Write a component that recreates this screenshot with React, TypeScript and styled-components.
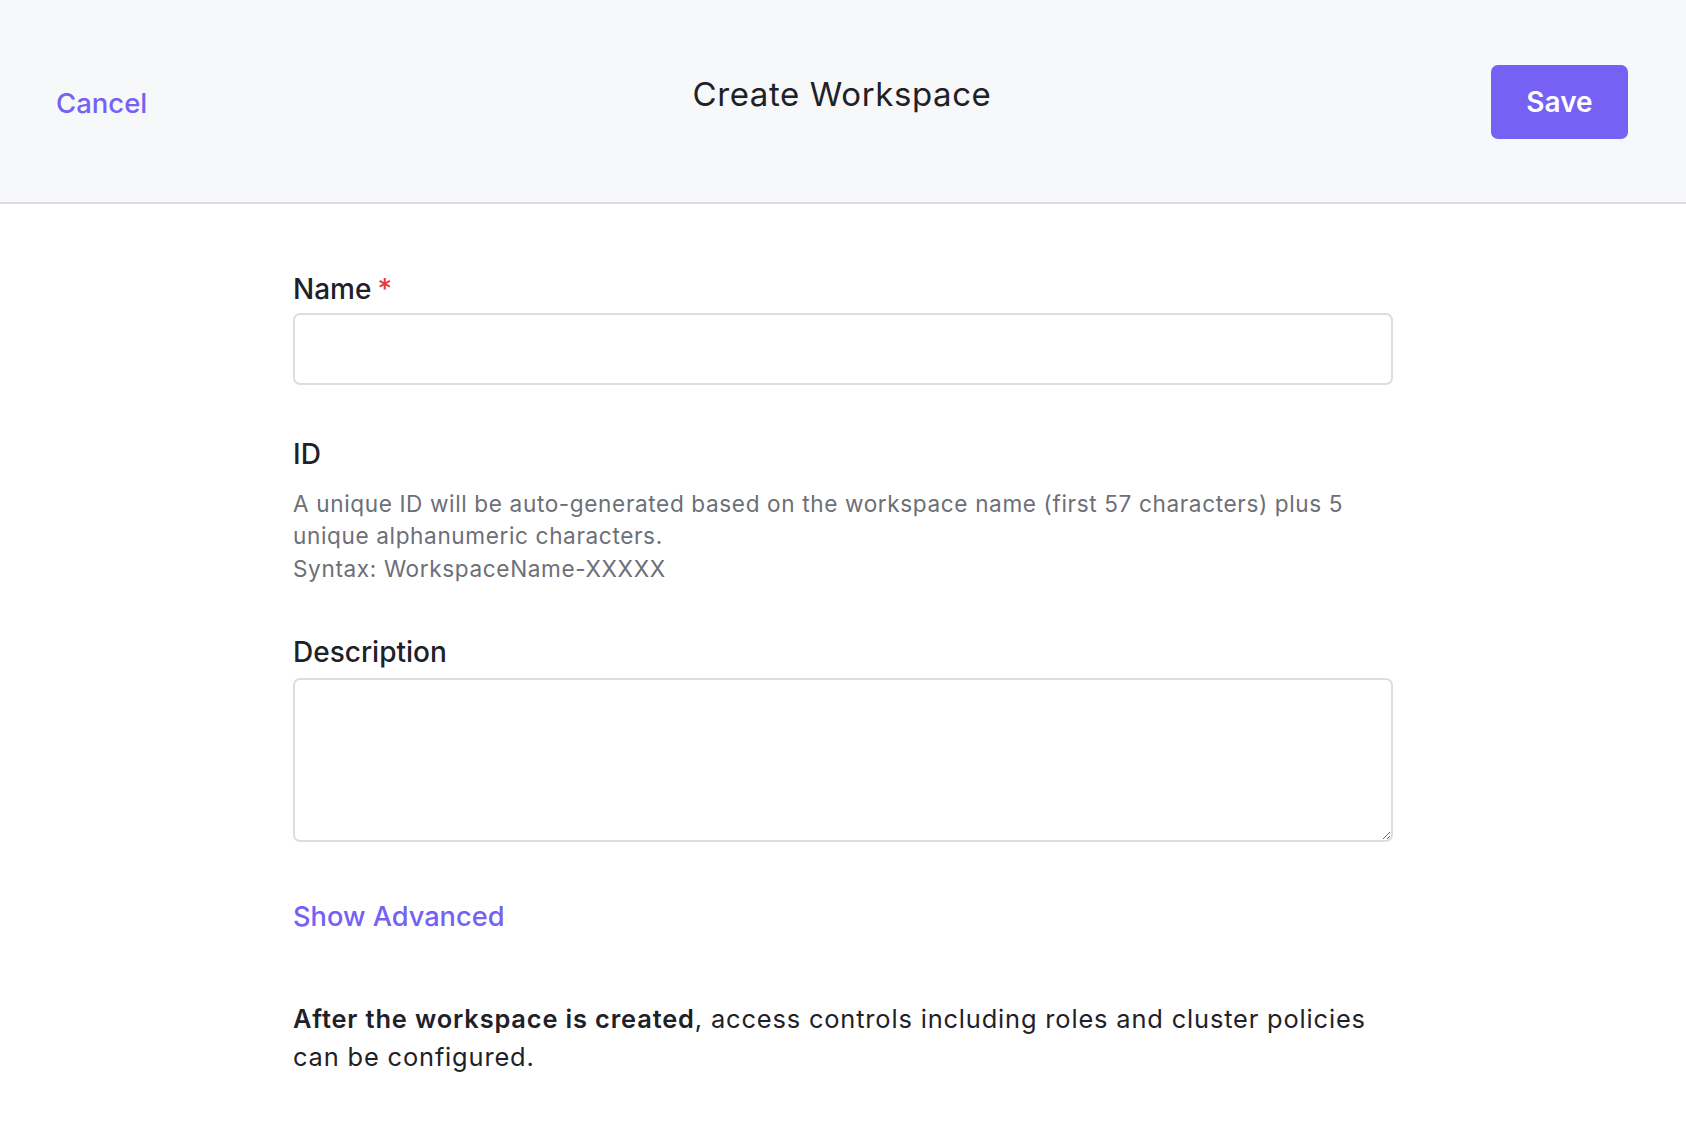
import React from "react";
import styled, { createGlobalStyle } from "styled-components";

const GlobalStyle = createGlobalStyle`
  html, body { margin: 0; padding: 0; background: #ffffff; }
  body { font-family: Inter, "Noto Sans", "Liberation Sans", sans-serif; color: #1f2128; }
  * { box-sizing: border-box; }
`;

const Header = styled.header`
  height: 204px;
  background: #f7f8fa;
  border-bottom: 2px solid #dcdde2;
  display: grid;
  grid-template-columns: 1fr auto 1fr;
  align-items: center;
  padding: 0 58px 0 56px;
`;

const LinkButton = styled.button`
  background: none;
  border: none;
  padding: 0;
  font-family: inherit;
  font-size: 28px;
  font-weight: 500;
  color: #7561f4;
  cursor: pointer;
  justify-self: start;
  line-height: 1.4;
`;

const CancelButton = styled(LinkButton)`
  font-size: 27.5px;
  margin-top: 5px;
`;

const Title = styled.h1`
  margin: 0 0 14px;
  font-size: 33px;
  font-weight: 400;
  color: #1f2128;
  letter-spacing: 0.6px;
`;

const SaveButton = styled.button`
  justify-self: end;
  width: 137px;
  height: 74px;
  margin-top: 1px;
  border: none;
  border-radius: 7px;
  background: #7761f5;
  color: #ffffff;
  font-family: inherit;
  font-size: 28px;
  font-weight: 600;
  cursor: pointer;
`;

const Main = styled.main`
  width: 1100px;
  margin: 0 auto;
  padding-top: 66px;
  display: flex;
  flex-direction: column;
`;

const Field = styled.div<{ $gap?: number }>`
  display: flex;
  flex-direction: column;
  margin-bottom: ${(p) => p.$gap ?? 48}px;
`;

const Label = styled.label<{ $space?: number }>`
  font-size: 28px;
  font-weight: 500;
  line-height: 39px;
  color: #1f2128;
  margin-bottom: ${(p) => p.$space ?? 7}px;
`;

const Required = styled.span`
  color: #e03c3c;
  margin-left: 6px;
`;

const TextInput = styled.input`
  height: 72px;
  border: 2px solid #dcdde1;
  border-radius: 7px;
  background: #fff;
  font-family: inherit;
  font-size: 24px;
  padding: 0 18px;
  outline: none;
`;

const TextArea = styled.textarea`
  height: 164px;
  border: 2px solid #dcdde1;
  border-radius: 7px;
  background: #fff;
  font-family: inherit;
  font-size: 24px;
  padding: 14px 18px;
  resize: vertical;
  outline: none;
`;

const Help = styled.p`
  margin: 0;
  font-size: 22.6px;
  line-height: 32.4px;
  letter-spacing: 0.62px;
  color: #6d6f77;
`;

const Advanced = styled(LinkButton)`
  font-size: 27.2px;
  margin-bottom: 64px;
  align-self: flex-start;
`;

const Note = styled.p`
  margin: 0;
  font-size: 25.4px;
  line-height: 37.8px;
  letter-spacing: 0.85px;
  color: #1f2128;
  strong { font-weight: 600; }
`;

export default function App() {
  return (
    <>
      <GlobalStyle />
      <Header>
        <CancelButton>Cancel</CancelButton>
        <Title>Create Workspace</Title>
        <SaveButton>Save</SaveButton>
      </Header>
      <Main>
        <Field $gap={50}>
          <Label $space={4}>
            Name<Required>*</Required>
          </Label>
          <TextInput type="text" />
        </Field>
        <Field $gap={48}>
          <Label $space={14}>ID</Label>
          <Help>
            A unique ID will be auto-generated based on the workspace name (first 57 characters) plus 5 unique alphanumeric characters.
            <br />
            Syntax: WorkspaceName-XXXXX
          </Help>
        </Field>
        <Field $gap={56}>
          <Label $space={6}>Description</Label>
          <TextArea />
        </Field>
        <Advanced>Show Advanced</Advanced>
        <Note>
          <strong>After the workspace is created</strong>, access controls including roles and cluster policies can be configured.
        </Note>
      </Main>
    </>
  );
}
